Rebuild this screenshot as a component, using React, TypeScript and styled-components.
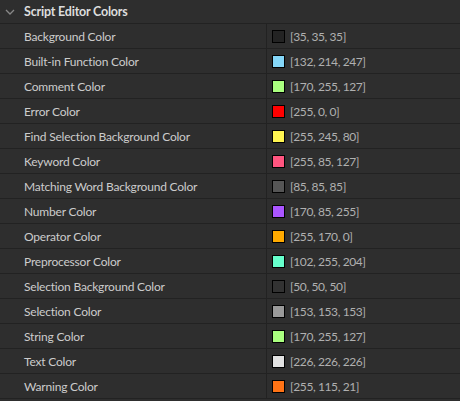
import styled, { createGlobalStyle } from 'styled-components';

const GlobalStyle = createGlobalStyle`
  html, body {
    margin: 0;
    padding: 0;
    background: #2e2e2e;
  }
  body {
    font-family: Lato, 'Liberation Sans', sans-serif;
  }
`;

type ColorRow = { name: string; rgb: [number, number, number] };

const rows: ColorRow[] = [
  { name: 'Background Color', rgb: [35, 35, 35] },
  { name: 'Built-in Function Color', rgb: [132, 214, 247] },
  { name: 'Comment Color', rgb: [170, 255, 127] },
  { name: 'Error Color', rgb: [255, 0, 0] },
  { name: 'Find Selection Background Color', rgb: [255, 245, 80] },
  { name: 'Keyword Color', rgb: [255, 85, 127] },
  { name: 'Matching Word Background Color', rgb: [85, 85, 85] },
  { name: 'Number Color', rgb: [170, 85, 255] },
  { name: 'Operator Color', rgb: [255, 170, 0] },
  { name: 'Preprocessor Color', rgb: [102, 255, 204] },
  { name: 'Selection Background Color', rgb: [50, 50, 50] },
  { name: 'Selection Color', rgb: [153, 153, 153] },
  { name: 'String Color', rgb: [170, 255, 127] },
  { name: 'Text Color', rgb: [226, 226, 226] },
  { name: 'Warning Color', rgb: [255, 115, 21] },
];

const Panel = styled.div`
  width: 460px;
  height: 401px;
  background: #2e2e2e;
  overflow: hidden;
`;

const Header = styled.div`
  height: 24px;
  display: flex;
  align-items: center;
  border-bottom: 1px solid #222222;
  box-sizing: border-box;
  padding-left: 5px;
  gap: 9px;
  color: #dddddd;
  font-weight: 700;
  font-size: 12.5px;
  letter-spacing: -0.2px;
`;

const Row = styled.div`
  height: 25px;
  display: grid;
  grid-template-columns: 267px 1fr;
  border-bottom: 1px solid #222222;
  box-sizing: border-box;
  font-size: 12px;
`;

const Label = styled.div`
  display: flex;
  align-items: center;
  padding-left: 24px;
  padding-top: 1px;
  color: #cccccc;
  letter-spacing: -0.2px;
  border-right: 1px solid #222222;
`;

const Value = styled.div`
  display: flex;
  align-items: center;
  padding-left: 5px;
  padding-top: 1px;
  gap: 5px;
  color: #b0b0b0;
  letter-spacing: -0.4px;
`;

const Swatch = styled.span<{ $color: string }>`
  width: 13px;
  height: 13px;
  margin-top: -1px;
  box-sizing: border-box;
  border: 1px solid #000000;
  background: ${(p) => p.$color};
`;

const Chevron = () => (
  <svg width="10" height="6" viewBox="0 0 10 6">
    <path d="M1 1 L5 5 L9 1" fill="none" stroke="#888888" strokeWidth="1.3" />
  </svg>
);

export default function App() {
  return (
    <Panel>
      <GlobalStyle />
      <Header>
        <Chevron />
        Script Editor Colors
      </Header>
      {rows.map((r) => (
        <Row key={r.name}>
          <Label>{r.name}</Label>
          <Value>
            <Swatch $color={`rgb(${r.rgb.join(',')})`} />
            [{r.rgb.join(', ')}]
          </Value>
        </Row>
      ))}
    </Panel>
  );
}
